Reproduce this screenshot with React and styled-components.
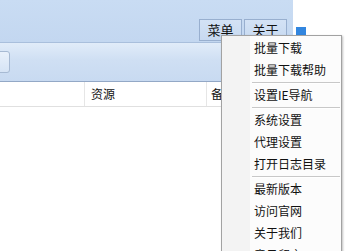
import React from "react";
import styled, { createGlobalStyle } from "styled-components";

const Global = createGlobalStyle`
  html, body { margin: 0; padding: 0; background: #ffffff; }
  body { font-family: "Noto Sans CJK SC", "Noto Sans", sans-serif; }
`;

const Page = styled.div`
  position: relative;
  width: 347px;
  height: 251px;
  overflow: hidden;
  display: flex;
  background: #ffffff;
`;

const Window = styled.div`
  width: 293px;
  flex: none;
  display: flex;
  flex-direction: column;
`;

const TitleBar = styled.div`
  height: 42px;
  border-bottom: 1px solid #a9bfdc;
  background: linear-gradient(#c9dcf3, #c3d7f0);
  display: flex;
  justify-content: flex-end;
  align-items: flex-end;
  gap: 2px;
  padding: 0 6px 1px 0;
  box-sizing: border-box;
  height: 43px;
`;

const TopButton = styled.div`
  width: 43px;
  height: 22px;
  box-sizing: border-box;
  border: 1px solid #98afcf;
  background: linear-gradient(#d3e2f5, #c7d9f0);
  font-size: 13px;
  line-height: 20px;
  color: #111;
  text-align: center;
`;

const ToolBar = styled.div`
  height: 39px;
  box-sizing: border-box;
  border-bottom: 1px solid #93a8c6;
  background: linear-gradient(#e1ecf9, #cfdff3 45%, #c8daf1);
  display: flex;
  align-items: center;
  overflow: hidden;
`;

const ToolButton = styled.div`
  width: 40px;
  height: 22px;
  margin-left: -30px;
  box-sizing: border-box;
  border: 1px solid #a7bad3;
  border-radius: 3px;
  background: linear-gradient(#e9f1fb, #d6e4f5);
  flex: none;
`;

const HeaderRow = styled.div`
  height: 25px;
  box-sizing: border-box;
  border-bottom: 1px solid #e0e0e0;
  display: grid;
  grid-template-columns: 85px 122px 1fr;
  background: #ffffff;
`;

const HeaderCell = styled.div`
  border-right: 1px solid #e6e6e6;
  font-size: 12px;
  line-height: 24px;
  padding-left: ${(p) => p.$pad || 5}px;
  color: #111;
  white-space: nowrap;
  overflow: hidden;
`;

const Side = styled.div`
  flex: 1;
  padding: 27px 0 0 3px;
`;

const BlueSquare = styled.div`
  width: 10px;
  height: 10px;
  background: #3286df;
`;

const Menu = styled.div`
  position: absolute;
  left: 221px;
  top: 35px;
  width: 121px;
  box-sizing: border-box;
  border: 1px solid #a2a2a2;
  padding: 1px 0 4px;
  background: linear-gradient(to right, #f3f3f3 0, #f3f3f3 28px, #fcfcfc 28px);
  box-shadow: 1px 1px 2px rgba(0, 0, 0, 0.25);
`;

const Item = styled.div`
  height: 22px;
  line-height: 22px;
  font-size: 12px;
  color: #111;
  padding-left: 32px;
  white-space: nowrap;
`;

const Separator = styled.div`
  height: 3px;
  display: flex;
  align-items: center;
  padding-left: 30px;
  padding-right: 1px;
  &::after {
    content: "";
    flex: 1;
    height: 1px;
    background: #c8c8c8;
    box-shadow: 0 1px 0 #ffffff;
  }
`;

const menu = [
  "批量下载",
  "批量下载帮助",
  "-",
  "设置IE导航",
  "-",
  "系统设置",
  "代理设置",
  "打开日志目录",
  "-",
  "最新版本",
  "访问官网",
  "关于我们",
  "意见留言",
];

export default function App() {
  return (
    <>
      <Global />
      <Page>
        <Window>
          <TitleBar>
            <TopButton>菜单</TopButton>
            <TopButton>关于</TopButton>
          </TitleBar>
          <ToolBar>
            <ToolButton />
          </ToolBar>
          <HeaderRow>
            <HeaderCell />
            <HeaderCell $pad={6}>资源</HeaderCell>
            <HeaderCell $pad={4}>备注</HeaderCell>
          </HeaderRow>
        </Window>
        <Side>
          <BlueSquare />
        </Side>
        <Menu>
          {menu.map((m, i) =>
            m === "-" ? <Separator key={i} /> : <Item key={i}>{m}</Item>
          )}
        </Menu>
      </Page>
    </>
  );
}
